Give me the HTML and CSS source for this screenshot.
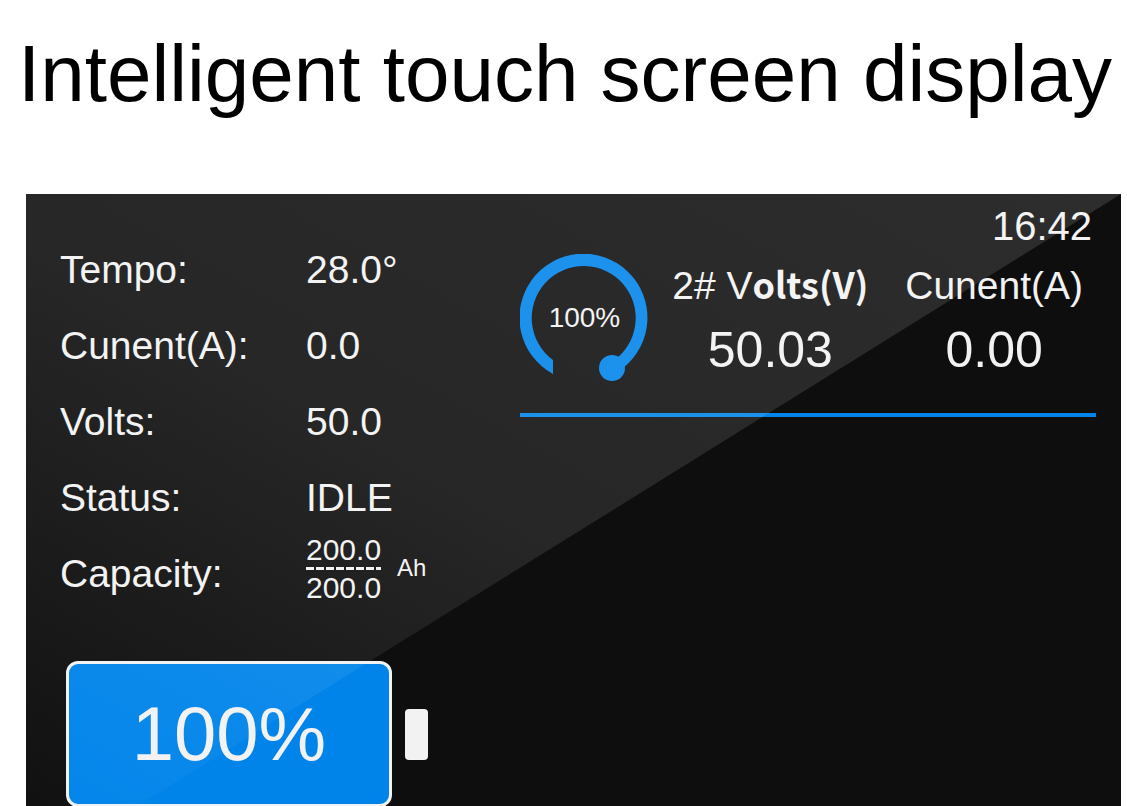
FILE: index.html
```html
<!DOCTYPE html>
<html lang="en">
<head>
    <meta charset="UTF-8">
    <meta name="viewport" content="width=device-width, initial-scale=1.0">
    <title>Intelligent touch screen display</title>
    <link rel="stylesheet" href="styles.css">
</head>
<body>
    <h1>Intelligent touch screen display</h1>

    <main class="screen">
        <section class="status">
            <dl class="readings">
                <dt>Tempo:</dt>
                <dd>28.0°</dd>
                <dt>Cunent(A):</dt>
                <dd>0.0</dd>
                <dt>Volts:</dt>
                <dd>50.0</dd>
                <dt>Status:</dt>
                <dd>IDLE</dd>
                <dt>Capacity:</dt>
                <dd class="capacity">
                    <div class="fraction">
                        <span>200.0</span>
                        <span class="dashes"></span>
                        <span>200.0</span>
                    </div>
                    <span class="unit">Ah</span>
                </dd>
            </dl>

            <div class="battery">
                <div class="battery-body">100%</div>
                <div class="battery-tip"></div>
            </div>
        </section>

        <section class="pack">
            <div class="clock">16:42</div>
            <div class="pack-row">
                <div class="gauge">
                    <svg viewBox="0 0 128 128" aria-hidden="true">
                        <path d="M33 120 A64 64 0 1 1 103 114 L92 114 L93 107 A52 52 0 1 0 33 106 Z"/>
                        <circle cx="92" cy="114" r="13"/>
                    </svg>
                    <span>100%</span>
                </div>
                <div class="cell">
                    <div class="cell-name">2# V<span class="heavy">olts(V)</span></div>
                    <div class="cell-value">50.03</div>
                </div>
                <div class="cell">
                    <div class="cell-name">Cunent(A)</div>
                    <div class="cell-value">0.00</div>
                </div>
            </div>
        </section>
    </main>
</body>
</html>
```

FILE: styles.css
```css
* {
    box-sizing: border-box;
}
body {
    font-family: "Liberation Sans", Arial, sans-serif;
    background-color: #fff;
    margin: 0;
    min-height: 100vh;
    display: flex;
    flex-direction: column;
}
h1 {
    margin: 0;
    padding: 28px 0 74px 18px;
    font-size: 80px;
    line-height: 92px;
    font-weight: normal;
    color: #000;
    white-space: nowrap;
}
.screen {
    position: relative;
    flex: 1;
    display: grid;
    grid-template-columns: 4fr 5fr;
    margin: 0 6px 0 26px;
    padding: 8px 25px 0 34px;
    background-color: #0e0e0e;
    color: #f2f2f2;
}
/* glass reflection over the whole screen */
.screen::after {
    content: "";
    position: absolute;
    inset: 0;
    background: linear-gradient(to top right, rgba(255, 255, 255, 0.01), rgba(255, 255, 255, 0.1) 45%, rgba(255, 255, 255, 0.13));
    clip-path: polygon(0 0, 100% 0, 10% 100%, 0 100%);
    pointer-events: none;
}
.status {
    padding-top: 30px;
}
.readings {
    display: grid;
    grid-template-columns: 246px 1fr;
    grid-auto-rows: 76px;
    align-items: center;
    margin: 0;
    font-size: 39px;
}
.readings dd {
    margin: 0;
}
.capacity {
    display: flex;
    align-items: center;
    gap: 16px;
    padding-bottom: 12px;
}
.fraction {
    display: flex;
    flex-direction: column;
    font-size: 30px;
    line-height: 35px;
}
.dashes {
    height: 3px;
    background: repeating-linear-gradient(to right, #f2f2f2 0 8px, transparent 8px 10px);
}
.unit {
    font-size: 24px;
}
.battery {
    display: flex;
    align-items: center;
    gap: 13px;
    margin: 49px 0 0 6px;
}
.battery-body {
    width: 326px;
    padding: 28px 0;
    border: 3px solid #f2f2f2;
    border-radius: 12px;
    background-color: #0084ea;
    font-size: 76px;
    line-height: 84px;
    text-align: center;
}
.battery-tip {
    width: 23px;
    height: 51px;
    border-radius: 4px;
    background-color: #f2f2f2;
}
.clock {
    padding-right: 4px;
    font-size: 40px;
    line-height: 48px;
    text-align: right;
}
.pack-row {
    display: grid;
    grid-template-columns: 128px 1fr 1fr;
    gap: 20px;
    padding: 4px 0 31px;
    border-bottom: 4px solid #0084ea;
}
.gauge {
    display: grid;
    place-items: center;
    height: 128px;
    font-size: 28px;
}
.gauge > * {
    grid-area: 1 / 1;
}
.gauge svg {
    width: 128px;
    height: 128px;
    fill: #0084ea;
}
.cell {
    text-align: center;
    white-space: nowrap;
}
.cell-name {
    font-size: 39px;
    line-height: 64px;
}
.cell-value {
    font-size: 50px;
    line-height: 64px;
}
.heavy {
    font-family: "Noto Sans CJK SC", sans-serif;
    font-size: 36px;
    font-weight: bold;
    line-height: 1;
}
```
